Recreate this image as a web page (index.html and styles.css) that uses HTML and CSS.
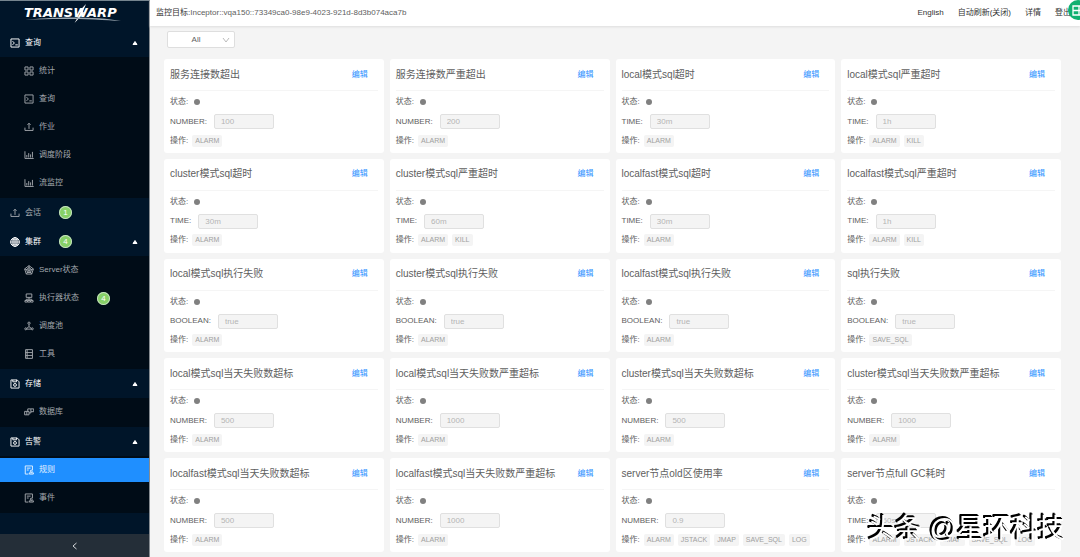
FILE: index.html
```html
<!DOCTYPE html>
<html lang="zh-CN">
<head>
<meta charset="utf-8">
<meta name="viewport" content="width=device-width, initial-scale=1">
<title>告警规则</title>
<link rel="stylesheet" href="styles.css">
</head>
<body>
<svg class="sprite" aria-hidden="true">
  <symbol id="i-code" viewBox="0 0 16 16"><path d="M1.500 1.500h13v13h-13zM4 5l3 3-3 3M8.500 11h4"/></symbol>
  <symbol id="i-grid" viewBox="0 0 16 16"><path d="M1.500 1.500h5v5h-5zM9.500 1.500h5v5h-5zM1.500 9.500h5v5h-5zM9.500 9.500h5v5h-5z"/></symbol>
  <symbol id="i-upload" viewBox="0 0 16 16"><path d="M1.500 9v4.500h13V9M8 11V2M5.500 4.500L8 2l2.500 2.500"/></symbol>
  <symbol id="i-chart" viewBox="0 0 16 16"><path d="M1.500 2v11.500h14M4.500 12V8M7.500 12V5M10.500 12V7M13.500 12V3"/></symbol>
  <symbol id="i-globe" viewBox="0 0 16 16"><circle cx="8" cy="8" r="7"/><ellipse cx="8" cy="8" rx="3.300" ry="7"/><path d="M1 8h14M8 1v14M2 4.500h12M2 11.500h12"/></symbol>
  <symbol id="i-radar" viewBox="0 0 16 16"><path d="M8 1l7 5.300-2.700 8.200H3.700L1 6.300zM8 4l4 3.200-1.600 4.800H5.600L4 7.200zM8 1v7.500M15 6.300L8 8.500M12.300 14.500L8 8.500M3.700 14.500L8 8.500M1 6.300l7 2.200"/></symbol>
  <symbol id="i-cluster" viewBox="0 0 16 16"><path d="M3.500 1.500h9v5.500h-9zM8 7v3M3.500 12v-2h9v2M1.500 12h4v2.500h-4zM6 12h4v2.500H6zM10.500 12h4v2.500h-4z"/></symbol>
  <symbol id="i-nodes" viewBox="0 0 16 16"><circle cx="8" cy="3.500" r="1.800"/><circle cx="2.800" cy="12.500" r="1.600"/><circle cx="13.200" cy="12.500" r="1.600"/><path d="M8 5.500V9L4 12M8 9l4 3M4.500 13h7"/></symbol>
  <symbol id="i-rack" viewBox="0 0 16 16"><path d="M2.500 1h11v14h-11zM2.500 5.700h11M2.500 10.300h11M5 1v14"/></symbol>
  <symbol id="i-save" viewBox="0 0 16 16"><path d="M1.500 1.500h10l3 3v10h-13zM4.500 1.500v3h6v-3"/><circle cx="8" cy="9.500" r="2.300"/></symbol>
  <symbol id="i-db" viewBox="0 0 16 16"><path d="M1 7h7v5.500H1zM6 7V3h5v6.500H8M11 3h4.500v4.500H11M4.500 7v5.500"/></symbol>
  <symbol id="i-audit" viewBox="0 0 16 16"><path d="M7 14.500H2v-13h11.500V8M4.500 5h6M4.500 8h3M8.500 14.500h6.500v-2H8.500z"/><circle cx="11.700" cy="9.800" r="1.600"/></symbol>
  <symbol id="i-caret" viewBox="0 0 6 6"><path d="M1 4.500l2-3 2 3z"/></symbol>
</svg>

<div class="app">
  <aside class="sidebar">
    <div class="brand">
      <svg class="logo" viewBox="0 0 104 24" role="img" aria-label="TRANSWARP">
        <text class="logo-text" x="3" y="16">TRANSWARP</text>
        <path class="logo-bolt" d="M65 3L57 11.500L59.500 11.500L53.500 22L64 11L61.500 11.500Z"/>
        <path class="logo-swoosh" d="M4 19C30 15.500 78 15.500 100 20C76 18 34 17 4 19Z"/>
      </svg>
    </div>
    <nav class="nav">
      <button class="group"><svg class="icon"><use href="#i-code"/></svg>查询<svg class="caret"><use href="#i-caret"/></svg></button>
      <div class="sub">
        <a class="item" href="#"><svg class="icon"><use href="#i-grid"/></svg>统计</a>
        <a class="item" href="#"><svg class="icon"><use href="#i-code"/></svg>查询</a>
        <a class="item" href="#"><svg class="icon"><use href="#i-upload"/></svg>作业</a>
        <a class="item" href="#"><svg class="icon"><use href="#i-chart"/></svg>调度阶段</a>
        <a class="item" href="#"><svg class="icon"><use href="#i-chart"/></svg>流监控</a>
      </div>
      <a class="group plain" href="#"><svg class="icon"><use href="#i-upload"/></svg>会话<span class="badge">1</span></a>
      <button class="group"><svg class="icon"><use href="#i-globe"/></svg>集群<span class="badge">4</span><svg class="caret"><use href="#i-caret"/></svg></button>
      <div class="sub">
        <a class="item" href="#"><svg class="icon"><use href="#i-radar"/></svg>Server状态</a>
        <a class="item" href="#"><svg class="icon"><use href="#i-cluster"/></svg>执行器状态<span class="badge">4</span></a>
        <a class="item" href="#"><svg class="icon"><use href="#i-nodes"/></svg>调度池</a>
        <a class="item" href="#"><svg class="icon"><use href="#i-rack"/></svg>工具</a>
      </div>
      <button class="group"><svg class="icon"><use href="#i-save"/></svg>存储<svg class="caret"><use href="#i-caret"/></svg></button>
      <div class="sub">
        <a class="item" href="#"><svg class="icon"><use href="#i-db"/></svg>数据库</a>
      </div>
      <button class="group"><svg class="icon"><use href="#i-save"/></svg>告警<svg class="caret"><use href="#i-caret"/></svg></button>
      <div class="sub">
        <a class="item active" href="#" aria-current="page"><svg class="icon"><use href="#i-audit"/></svg>规则</a>
        <a class="item" href="#"><svg class="icon"><use href="#i-audit"/></svg>事件</a>
      </div>
    </nav>
    <button class="collapse" aria-label="收起"><svg viewBox="0 0 8 8"><path d="M5.500 1L2 4l3.500 3"/></svg></button>
  </aside>

  <div class="page">
    <header class="topbar">
      <div class="target"><b>监控目标:</b>Inceptor::vqa150::73349ca0-98e9-4023-921d-8d3b074aca7b</div>
      <nav class="links">
        <a href="#">English</a><a href="#">自动刷新(关闭)</a><a href="#">详情</a><a href="#">登出</a>
      </nav>
      <button class="float" aria-label="表格"><svg viewBox="0 0 20 20"><path d="M5 6h12v9H5zM5 10.500h12M11 6v9"/></svg></button>
    </header>

    <main class="content">
      <div class="filter">
        <select aria-label="筛选"><option>All</option></select>
        <svg viewBox="0 0 8 8"><path d="M1 2l3 4 3-4"/></svg>
      </div>

      <div class="cards">
        <section class="card">
          <div class="head"><h2>服务连接数超出</h2><a href="#">编辑</a></div>
          <div class="row">状态:<i class="dot"></i></div>
          <label class="row">NUMBER:<input value="100" disabled></label>
          <div class="row tags">操作:<span>ALARM</span></div>
        </section>
        <section class="card">
          <div class="head"><h2>服务连接数严重超出</h2><a href="#">编辑</a></div>
          <div class="row">状态:<i class="dot"></i></div>
          <label class="row">NUMBER:<input value="200" disabled></label>
          <div class="row tags">操作:<span>ALARM</span></div>
        </section>
        <section class="card">
          <div class="head"><h2>local模式sql超时</h2><a href="#">编辑</a></div>
          <div class="row">状态:<i class="dot"></i></div>
          <label class="row">TIME:<input value="30m" disabled></label>
          <div class="row tags">操作:<span>ALARM</span></div>
        </section>
        <section class="card">
          <div class="head"><h2>local模式sql严重超时</h2><a href="#">编辑</a></div>
          <div class="row">状态:<i class="dot"></i></div>
          <label class="row">TIME:<input value="1h" disabled></label>
          <div class="row tags">操作:<span>ALARM</span><span>KILL</span></div>
        </section>

        <section class="card">
          <div class="head"><h2>cluster模式sql超时</h2><a href="#">编辑</a></div>
          <div class="row">状态:<i class="dot"></i></div>
          <label class="row">TIME:<input value="30m" disabled></label>
          <div class="row tags">操作:<span>ALARM</span></div>
        </section>
        <section class="card">
          <div class="head"><h2>cluster模式sql严重超时</h2><a href="#">编辑</a></div>
          <div class="row">状态:<i class="dot"></i></div>
          <label class="row">TIME:<input value="60m" disabled></label>
          <div class="row tags">操作:<span>ALARM</span><span>KILL</span></div>
        </section>
        <section class="card">
          <div class="head"><h2>localfast模式sql超时</h2><a href="#">编辑</a></div>
          <div class="row">状态:<i class="dot"></i></div>
          <label class="row">TIME:<input value="30m" disabled></label>
          <div class="row tags">操作:<span>ALARM</span></div>
        </section>
        <section class="card">
          <div class="head"><h2>localfast模式sql严重超时</h2><a href="#">编辑</a></div>
          <div class="row">状态:<i class="dot"></i></div>
          <label class="row">TIME:<input value="1h" disabled></label>
          <div class="row tags">操作:<span>ALARM</span><span>KILL</span></div>
        </section>

        <section class="card">
          <div class="head"><h2>local模式sql执行失败</h2><a href="#">编辑</a></div>
          <div class="row">状态:<i class="dot"></i></div>
          <label class="row">BOOLEAN:<input value="true" disabled></label>
          <div class="row tags">操作:<span>ALARM</span></div>
        </section>
        <section class="card">
          <div class="head"><h2>cluster模式sql执行失败</h2><a href="#">编辑</a></div>
          <div class="row">状态:<i class="dot"></i></div>
          <label class="row">BOOLEAN:<input value="true" disabled></label>
          <div class="row tags">操作:<span>ALARM</span></div>
        </section>
        <section class="card">
          <div class="head"><h2>localfast模式sql执行失败</h2><a href="#">编辑</a></div>
          <div class="row">状态:<i class="dot"></i></div>
          <label class="row">BOOLEAN:<input value="true" disabled></label>
          <div class="row tags">操作:<span>ALARM</span></div>
        </section>
        <section class="card">
          <div class="head"><h2>sql执行失败</h2><a href="#">编辑</a></div>
          <div class="row">状态:<i class="dot"></i></div>
          <label class="row">BOOLEAN:<input value="true" disabled></label>
          <div class="row tags">操作:<span>SAVE_SQL</span></div>
        </section>

        <section class="card">
          <div class="head"><h2>local模式sql当天失败数超标</h2><a href="#">编辑</a></div>
          <div class="row">状态:<i class="dot"></i></div>
          <label class="row">NUMBER:<input value="500" disabled></label>
          <div class="row tags">操作:<span>ALARM</span></div>
        </section>
        <section class="card">
          <div class="head"><h2>local模式sql当天失败数严重超标</h2><a href="#">编辑</a></div>
          <div class="row">状态:<i class="dot"></i></div>
          <label class="row">NUMBER:<input value="1000" disabled></label>
          <div class="row tags">操作:<span>ALARM</span></div>
        </section>
        <section class="card">
          <div class="head"><h2>cluster模式sql当天失败数超标</h2><a href="#">编辑</a></div>
          <div class="row">状态:<i class="dot"></i></div>
          <label class="row">NUMBER:<input value="500" disabled></label>
          <div class="row tags">操作:<span>ALARM</span></div>
        </section>
        <section class="card">
          <div class="head"><h2>cluster模式sql当天失败数严重超标</h2><a href="#">编辑</a></div>
          <div class="row">状态:<i class="dot"></i></div>
          <label class="row">NUMBER:<input value="1000" disabled></label>
          <div class="row tags">操作:<span>ALARM</span></div>
        </section>

        <section class="card">
          <div class="head"><h2>localfast模式sql当天失败数超标</h2><a href="#">编辑</a></div>
          <div class="row">状态:<i class="dot"></i></div>
          <label class="row">NUMBER:<input value="500" disabled></label>
          <div class="row tags">操作:<span>ALARM</span></div>
        </section>
        <section class="card">
          <div class="head"><h2>localfast模式sql当天失败数严重超标</h2><a href="#">编辑</a></div>
          <div class="row">状态:<i class="dot"></i></div>
          <label class="row">NUMBER:<input value="1000" disabled></label>
          <div class="row tags">操作:<span>ALARM</span></div>
        </section>
        <section class="card">
          <div class="head"><h2>server节点old区使用率</h2><a href="#">编辑</a></div>
          <div class="row">状态:<i class="dot"></i></div>
          <label class="row">NUMBER:<input value="0.9" disabled></label>
          <div class="row tags">操作:<span>ALARM</span><span>JSTACK</span><span>JMAP</span><span>SAVE_SQL</span><span>LOG</span></div>
        </section>
        <section class="card">
          <div class="head"><h2>server节点full GC耗时</h2><a href="#">编辑</a></div>
          <div class="row">状态:<i class="dot"></i></div>
          <label class="row">TIME:<input value="60s" disabled></label>
          <div class="row tags">操作:<span>ALARM</span><span>JSTACK</span><span>JMAP</span><span>SAVE_SQL</span><span>LOG</span></div>
        </section>
      </div>
    </main>
  </div>
</div>
<div class="watermark">头条 @星环科技</div>
</body>
</html>
```
FILE: styles.css
```css
* { box-sizing: border-box; }

body {
  margin: 0;
  font: 8px/12px "Liberation Sans", "Noto Sans CJK SC", sans-serif;
  color: #606060;
  background: #f4f4f4;
}

a { color: inherit; text-decoration: none; }
button, input, select { font: inherit; color: inherit; border: 0; margin: 0; padding: 0; }
svg { fill: none; stroke: currentColor; }

.sprite { position: absolute; width: 0; height: 0; }
.app { display: flex; min-height: 100vh; }

/* Sidebar */
.sidebar {
  display: flex;
  flex-direction: column;
  flex: 0 0 150px;
  background: #001529;
  border-top: 1px solid #75848e;
  border-right: 1px solid #858b91;
  color: #a2a8ad;
}
.brand { height: 27px; padding-left: 21px; }
.logo { display: block; width: 104px; height: 24px; }
.logo-text {
  font: italic bold 13px "DejaVu Sans", sans-serif;
  fill: #fff;
  stroke: none;
}
.logo-bolt { fill: #fff; stroke: none; }
.logo-swoosh { fill: #9aa7b1; stroke: none; }

.nav { flex: 1; }
.group {
  display: flex;
  align-items: center;
  width: 100%;
  height: 29px;
  padding: 0 11px 0 10px;
  background: none;
  color: #fff;
  text-align: left;
}
.group.plain { color: #a2a8ad; }
.icon { width: 10px; height: 10px; margin-right: 5px; stroke-width: 1.5; }
.caret { width: 6px; height: 6px; margin-left: auto; fill: currentColor; }
.sub {
  display: flex;
  flex-direction: column;
  gap: 4px;
  padding: 2px 0 3px;
  background: #000c17;
}
.item {
  display: flex;
  align-items: center;
  height: 24px;
  padding-left: 24px;
}
.item.active { background: #1f8fff; color: #e4f2ff; }
.badge {
  width: 13px;
  height: 13px;
  margin-left: 18px;
  border-radius: 50%;
  background: #87d068;
  box-shadow: 0 0 0 1px #c8e0c4 inset;
  color: #fff;
  line-height: 13px;
  text-align: center;
}
.collapse { height: 23px; background: #242e38; color: #d5d8db; }
.collapse svg { width: 8px; height: 8px; margin-top: 5px; }

/* Top bar */
.page { display: flex; flex-direction: column; flex: 1; min-width: 0; }
.topbar {
  position: relative;
  display: flex;
  align-items: center;
  justify-content: space-between;
  height: 26px;
  padding: 0 9px 0 6px;
  background: #fff;
  box-shadow: 0 1px 2px #ddd;
}
.target b { font-weight: normal; color: #333; }
.links { display: flex; gap: 14px; color: #333; }
.float {
  position: absolute;
  top: 0;
  right: -8px;
  width: 20px;
  height: 20px;
  border-radius: 50%;
  background: #10b070;
  color: #fff;
  clip-path: inset(0 8px 0 0);
}
.float svg { display: block; width: 20px; height: 20px; stroke-width: 1.3; }

/* Rules */
.content {
  display: flex;
  flex-direction: column;
  flex: 1;
  padding: 5px 19px 5px 14px;
}
.filter { position: relative; width: 68px; margin: 0 0 11px 3px; }
.filter select {
  display: block;
  width: 100%;
  height: 17px;
  padding-right: 10px;
  appearance: none;
  background: #fff;
  border: 1px solid #dedede;
  border-radius: 2px;
  text-align: center;
  text-align-last: center;
}
.filter svg { position: absolute; top: 5px; right: 5px; width: 8px; height: 8px; color: #bbb; }

.cards {
  display: grid;
  grid-template-columns: repeat(4, 1fr);
  grid-auto-rows: 1fr;
  gap: 6px;
  flex: 1;
}
.card { padding: 0 6px; background: #fff; border-radius: 3px; }
.head {
  display: flex;
  align-items: center;
  justify-content: space-between;
  height: 32px;
  margin-bottom: 1px;
  padding-right: 10px;
  border-bottom: 1px solid #f5f5f5;
}
.head h2 { margin: 0; font-size: 10px; font-weight: normal; }
.head a { color: #2a90ff; }
.row { display: flex; align-items: center; height: 20px; }
.row + .row { height: 19px; }
.dot { width: 6px; height: 6px; margin-left: 6px; border-radius: 50%; background: #808080; }
.row input {
  width: 60px;
  height: 15px;
  margin-left: 7px;
  padding: 0 6px;
  background: #f4f4f4;
  border: 1px solid #e0e0e0;
  border-radius: 2px;
  color: #b5b5b5;
}
.tags { gap: 4px; }
.tags span {
  padding: 0 3px;
  background: #f4f4f4;
  border-radius: 2px;
  color: #a0a0a0;
  font-size: 7px;
}

.watermark {
  position: fixed;
  right: 15px;
  bottom: 8px;
  color: #fff;
  font-size: 27px;
  line-height: 40px;
  text-shadow: -1px -1px 0 #000, -2px -1px 0 #000, -2px -2px 0 #000;
  pointer-events: none;
}
```
